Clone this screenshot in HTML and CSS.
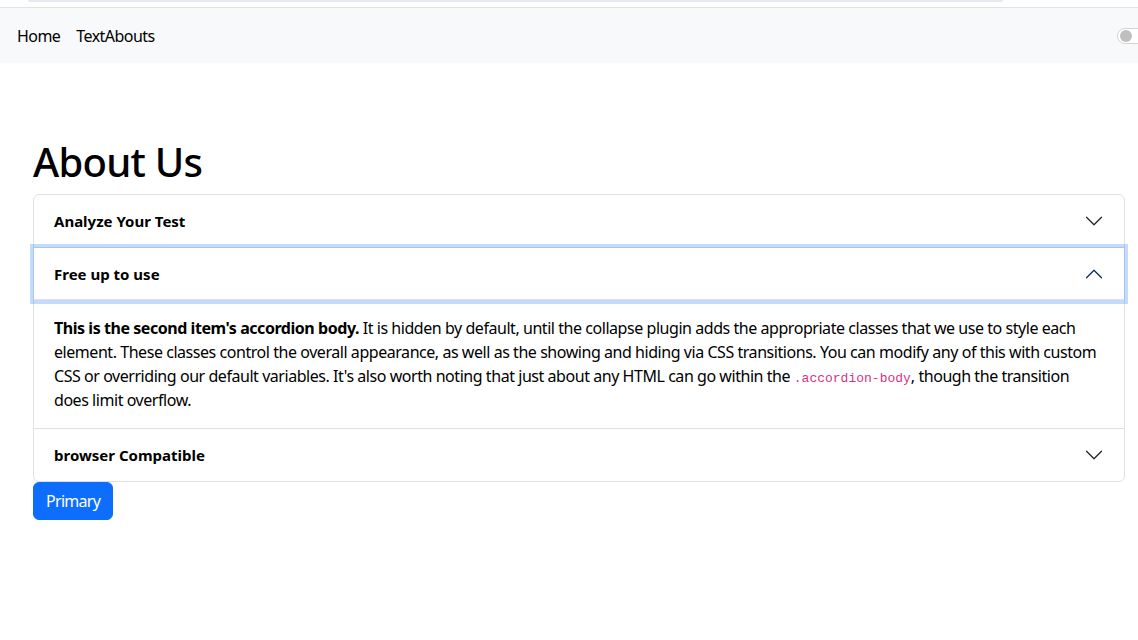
FILE: index.html
```html
<!DOCTYPE html>
<html lang="en">
<head>
<meta charset="utf-8">
<title>About Us</title>
<link rel="stylesheet" href="styles.css">
</head>
<body>
<div class="top-strip"><div class="strip-tab"></div></div>
<nav class="navbar">
  <ul class="nav-links">
    <li><a class="nav-link" href="#">Home</a></li>
    <li><a class="nav-link" href="#">TextAbouts</a></li>
  </ul>
  <div class="switch"><span class="knob"></span></div>
</nav>
<main class="main">
  <h1 class="title">About Us</h1>
  <div class="accordion">
    <div class="acc-item">
      <button class="acc-btn"><strong>Analyze Your Test</strong>
        <svg class="chev" viewBox="0 0 16 16" fill="none" stroke="#212529" stroke-linecap="round" stroke-linejoin="round"><path d="M2 5L8 11L14 5"/></svg>
      </button>
    </div>
    <div class="acc-item">
      <button class="acc-btn active"><strong>Free up to use</strong>
        <svg class="chev up" viewBox="0 0 16 16" fill="none" stroke="#052c65" stroke-linecap="round" stroke-linejoin="round"><path d="M2 5L8 11L14 5"/></svg>
      </button>
      <div class="acc-body"><strong>This is the second item's accordion body.</strong> It is hidden by default, until the collapse plugin adds the appropriate classes that we use to style each element. These classes control the overall appearance, as well as the showing and hiding via CSS transitions. You can modify any of this with custom CSS or overriding our default variables. It's also worth noting that just about any HTML can go within the <code>.accordion-body</code>, though the transition does&nbsp;limit overflow.</div>
    </div>
    <div class="acc-item">
      <button class="acc-btn"><strong>browser Compatible</strong>
        <svg class="chev" viewBox="0 0 16 16" fill="none" stroke="#212529" stroke-linecap="round" stroke-linejoin="round"><path d="M2 5L8 11L14 5"/></svg>
      </button>
    </div>
  </div>
  <button class="btn-primary">Primary</button>
</main>
</body>
</html>
```
FILE: styles.css
```css
* { box-sizing: border-box; }
html, body { margin: 0; padding: 0; }
body {
  font-family: "Noto Sans", "Open Sans", sans-serif;
  font-size: 16px;
  line-height: 24px;
  color: #212529;
  background: #fff;
  overflow: hidden;
}
.top-strip { height: 7px; }
.strip-tab {
  margin-left: 28px;
  width: 975px;
  height: 2px;
  background: #e6e8f4;
  border-radius: 0 0 6px 6px;
}
.navbar {
  height: 56px;
  border-top: 1px solid #e0e3e6;
  background: #f8f9fa;
  display: flex;
  align-items: center;
  justify-content: space-between;
  padding: 1px 0 0 9px;
  overflow: hidden;
}
.nav-links { list-style: none; margin: 0; padding: 0; display: flex; }
.nav-link {
  display: block;
  padding: 0 8px;
  color: #000;
  text-decoration: none;
  font-size: 16px;
  letter-spacing: -0.55px;
}
.switch {
  width: 32px;
  height: 16px;
  margin-right: -11px;
  border: 1px solid #d3d4d5;
  border-radius: 8px;
  background: #fff;
  display: flex;
  align-items: center;
  padding-left: 2px;
}
.knob { width: 12px; height: 12px; border-radius: 50%; background: #bfbfbf; }
.main {
  margin-left: 33px;
  width: 1092px;
  padding-top: 75px;
}
.title {
  margin: 0 0 8px;
  font-size: 40px;
  line-height: 48px;
  font-weight: 500;
  letter-spacing: -0.75px;
  color: #000;
}
.accordion {
  border: 1px solid #dee2e6;
  border-radius: 6px;
}
.acc-item + .acc-item { border-top: 1px solid #dee2e6; }
.acc-btn {
  width: 100%;
  display: flex;
  align-items: center;
  justify-content: space-between;
  padding: 16px 20px;
  height: 52px;
  border: 0;
  background: transparent;
  font-family: inherit;
  font-size: 15px;
  line-height: 20px;
  color: #000;
  text-align: left;
  position: relative;
}
.acc-btn.active {
  z-index: 3;
  box-shadow: inset 0 -1px 0 #dee2e6, 0 0 0 4px rgba(13,110,253,.25);
}
.acc-item:first-child .acc-btn { border-radius: 5px 5px 0 0; }
.chev { width: 20px; height: 20px; }
.chev.up { transform: rotate(180deg); }
.acc-body {
  padding: 16px 20px;
  color: #000;
  letter-spacing: -0.45px;
}
.acc-body strong { color: #000; }
code {
  font-family: "Liberation Mono", monospace;
  font-size: 13px;
  line-height: 1;
  letter-spacing: 0;
  color: #d63384;
}
.btn-primary {
  display: block;
  height: 38px;
  padding: 0 12px;
  border: 1px solid #0d6efd;
  border-radius: 6px;
  background: #0d6efd;
  color: #fff;
  font-family: inherit;
  font-size: 16px;
  line-height: 24px;
  letter-spacing: -0.7px;
}
```
